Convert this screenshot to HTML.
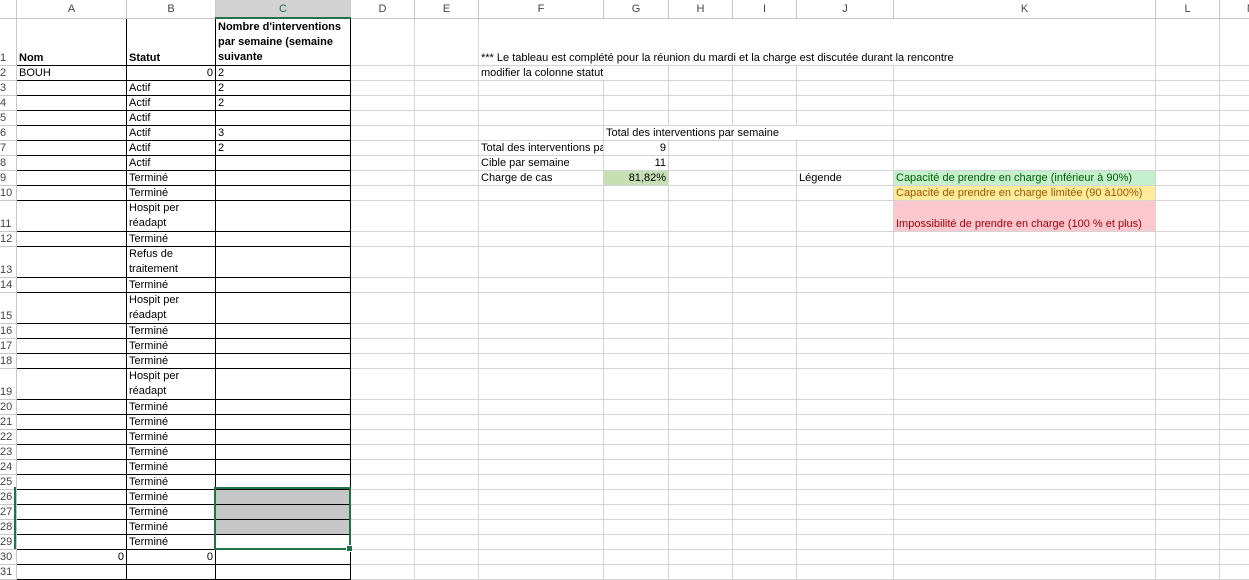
<!DOCTYPE html>
<html><head><meta charset="utf-8"><style>
body{margin:0;width:1249px;height:566px;overflow:hidden;background:#fff;font-family:"Liberation Sans",sans-serif;font-size:11px;color:#000;position:relative}
table{border-collapse:collapse;table-layout:fixed;position:absolute;left:-1px;top:-1px;width:1283px}
td{border:1px solid #d4d4d4;padding:0 2px;height:14px;line-height:14px;white-space:nowrap;overflow:visible;vertical-align:bottom}
tr.h td{background:#fff;color:#444;text-align:center;vertical-align:middle;height:17px;border-color:#c8c8c8}
td.rn{background:#fff;color:#444;padding:0;text-align:left;border-color:#c8c8c8;font-size:11px;overflow:hidden}
td.b{border:1px solid #000}
td.w{white-space:normal;line-height:15px}
.r{text-align:right}
.sel{background:#c6c6c6}
.rs{background:#d2d2d2;color:#217346}
</style></head><body>
<table>
<colgroup><col style="width:17px"><col style="width:110px"><col style="width:89px"><col style="width:135px"><col style="width:64px"><col style="width:64px"><col style="width:125px"><col style="width:65px"><col style="width:64px"><col style="width:64px"><col style="width:97px"><col style="width:262px"><col style="width:64px"><col style="width:64px"></colgroup>
<tr class="h"><td></td><td>A</td><td>B</td><td style="background:#d2d2d2;color:#217346;border-bottom:2px solid #217346">C</td><td>D</td><td>E</td><td>F</td><td>G</td><td>H</td><td>I</td><td>J</td><td>K</td><td>L</td><td>M</td></tr>
<tr style="height:47px"><td class="rn">1</td><td class="b"><b>Nom</b></td><td class="b"><b>Statut</b></td><td class="b w"><b>Nombre d'interventions par semaine (semaine suivante</b></td><td></td><td></td><td colspan="6">*** Le tableau est complété pour la réunion du mardi et la charge est discutée durant la rencontre</td><td></td><td></td></tr>
<tr><td class="rn">2</td><td class="b">BOUH</td><td class="b r">0</td><td class="b">2</td><td></td><td></td><td colspan="2">modifier la colonne statut</td><td></td><td></td><td></td><td></td><td></td><td></td></tr>
<tr><td class="rn">3</td><td class="b"></td><td class="b">Actif</td><td class="b">2</td><td></td><td></td><td></td><td></td><td></td><td></td><td></td><td></td><td></td><td></td></tr>
<tr><td class="rn">4</td><td class="b"></td><td class="b">Actif</td><td class="b">2</td><td></td><td></td><td></td><td></td><td></td><td></td><td></td><td></td><td></td><td></td></tr>
<tr><td class="rn">5</td><td class="b"></td><td class="b">Actif</td><td class="b"></td><td></td><td></td><td></td><td></td><td></td><td></td><td></td><td></td><td></td><td></td></tr>
<tr><td class="rn">6</td><td class="b"></td><td class="b">Actif</td><td class="b">3</td><td></td><td></td><td></td><td colspan="4">Total des interventions par semaine</td><td></td><td></td><td></td></tr>
<tr><td class="rn">7</td><td class="b"></td><td class="b">Actif</td><td class="b">2</td><td></td><td></td><td style="overflow:hidden">Total des interventions par semaine</td><td class="r">9</td><td></td><td></td><td></td><td></td><td></td><td></td></tr>
<tr><td class="rn">8</td><td class="b"></td><td class="b">Actif</td><td class="b"></td><td></td><td></td><td>Cible par semaine</td><td class="r">11</td><td></td><td></td><td></td><td></td><td></td><td></td></tr>
<tr><td class="rn">9</td><td class="b"></td><td class="b">Terminé</td><td class="b"></td><td></td><td></td><td>Charge de cas</td><td class="r" style="background:#c6e0b4">81,82%</td><td></td><td></td><td>Légende</td><td style="background:#c6efce;color:#006100">Capacité de prendre en charge (inférieur à 90%)</td><td></td><td></td></tr>
<tr><td class="rn">10</td><td class="b"></td><td class="b">Terminé</td><td class="b"></td><td></td><td></td><td></td><td></td><td></td><td></td><td></td><td style="background:#ffeb9c;color:#9c5700">Capacité de prendre en charge limitée (90 à100%)</td><td></td><td></td></tr>
<tr style="height:31px"><td class="rn">11</td><td class="b"></td><td class="b w">Hospit per réadapt</td><td class="b"></td><td></td><td></td><td></td><td></td><td></td><td></td><td></td><td style="background:#ffc7ce;color:#9c0006">Impossibilité de prendre en charge (100 % et plus)</td><td></td><td></td></tr>
<tr><td class="rn">12</td><td class="b"></td><td class="b">Terminé</td><td class="b"></td><td></td><td></td><td></td><td></td><td></td><td></td><td></td><td></td><td></td><td></td></tr>
<tr style="height:31px"><td class="rn">13</td><td class="b"></td><td class="b w">Refus de traitement</td><td class="b"></td><td></td><td></td><td></td><td></td><td></td><td></td><td></td><td></td><td></td><td></td></tr>
<tr><td class="rn">14</td><td class="b"></td><td class="b">Terminé</td><td class="b"></td><td></td><td></td><td></td><td></td><td></td><td></td><td></td><td></td><td></td><td></td></tr>
<tr style="height:31px"><td class="rn">15</td><td class="b"></td><td class="b w">Hospit per réadapt</td><td class="b"></td><td></td><td></td><td></td><td></td><td></td><td></td><td></td><td></td><td></td><td></td></tr>
<tr><td class="rn">16</td><td class="b"></td><td class="b">Terminé</td><td class="b"></td><td></td><td></td><td></td><td></td><td></td><td></td><td></td><td></td><td></td><td></td></tr>
<tr><td class="rn">17</td><td class="b"></td><td class="b">Terminé</td><td class="b"></td><td></td><td></td><td></td><td></td><td></td><td></td><td></td><td></td><td></td><td></td></tr>
<tr><td class="rn">18</td><td class="b"></td><td class="b">Terminé</td><td class="b"></td><td></td><td></td><td></td><td></td><td></td><td></td><td></td><td></td><td></td><td></td></tr>
<tr style="height:31px"><td class="rn">19</td><td class="b"></td><td class="b w">Hospit per réadapt</td><td class="b"></td><td></td><td></td><td></td><td></td><td></td><td></td><td></td><td></td><td></td><td></td></tr>
<tr><td class="rn">20</td><td class="b"></td><td class="b">Terminé</td><td class="b"></td><td></td><td></td><td></td><td></td><td></td><td></td><td></td><td></td><td></td><td></td></tr>
<tr><td class="rn">21</td><td class="b"></td><td class="b">Terminé</td><td class="b"></td><td></td><td></td><td></td><td></td><td></td><td></td><td></td><td></td><td></td><td></td></tr>
<tr><td class="rn">22</td><td class="b"></td><td class="b">Terminé</td><td class="b"></td><td></td><td></td><td></td><td></td><td></td><td></td><td></td><td></td><td></td><td></td></tr>
<tr><td class="rn">23</td><td class="b"></td><td class="b">Terminé</td><td class="b"></td><td></td><td></td><td></td><td></td><td></td><td></td><td></td><td></td><td></td><td></td></tr>
<tr><td class="rn">24</td><td class="b"></td><td class="b">Terminé</td><td class="b"></td><td></td><td></td><td></td><td></td><td></td><td></td><td></td><td></td><td></td><td></td></tr>
<tr><td class="rn">25</td><td class="b"></td><td class="b">Terminé</td><td class="b"></td><td></td><td></td><td></td><td></td><td></td><td></td><td></td><td></td><td></td><td></td></tr>
<tr><td class="rn rs">26</td><td class="b"></td><td class="b">Terminé</td><td class="b sel"></td><td></td><td></td><td></td><td></td><td></td><td></td><td></td><td></td><td></td><td></td></tr>
<tr><td class="rn rs">27</td><td class="b"></td><td class="b">Terminé</td><td class="b sel"></td><td></td><td></td><td></td><td></td><td></td><td></td><td></td><td></td><td></td><td></td></tr>
<tr><td class="rn rs">28</td><td class="b"></td><td class="b">Terminé</td><td class="b sel"></td><td></td><td></td><td></td><td></td><td></td><td></td><td></td><td></td><td></td><td></td></tr>
<tr><td class="rn rs">29</td><td class="b"></td><td class="b">Terminé</td><td class="b"></td><td></td><td></td><td></td><td></td><td></td><td></td><td></td><td></td><td></td><td></td></tr>
<tr><td class="rn">30</td><td class="b r">0</td><td class="b r">0</td><td class="b"></td><td></td><td></td><td></td><td></td><td></td><td></td><td></td><td></td><td></td><td></td></tr>
<tr><td class="rn">31</td><td class="b"></td><td class="b"></td><td class="b"></td><td></td><td></td><td></td><td></td><td></td><td></td><td></td><td></td><td></td><td></td></tr>
</table>
<div style="position:absolute;left:214px;top:487px;width:133px;height:59px;border:2px solid #217346"></div>
<div style="position:absolute;left:346px;top:545px;width:5px;height:5px;background:#217346;border:1px solid #fff"></div>
<div style="position:absolute;left:14px;top:487px;width:2px;height:62px;background:#217346"></div>
</body></html>
